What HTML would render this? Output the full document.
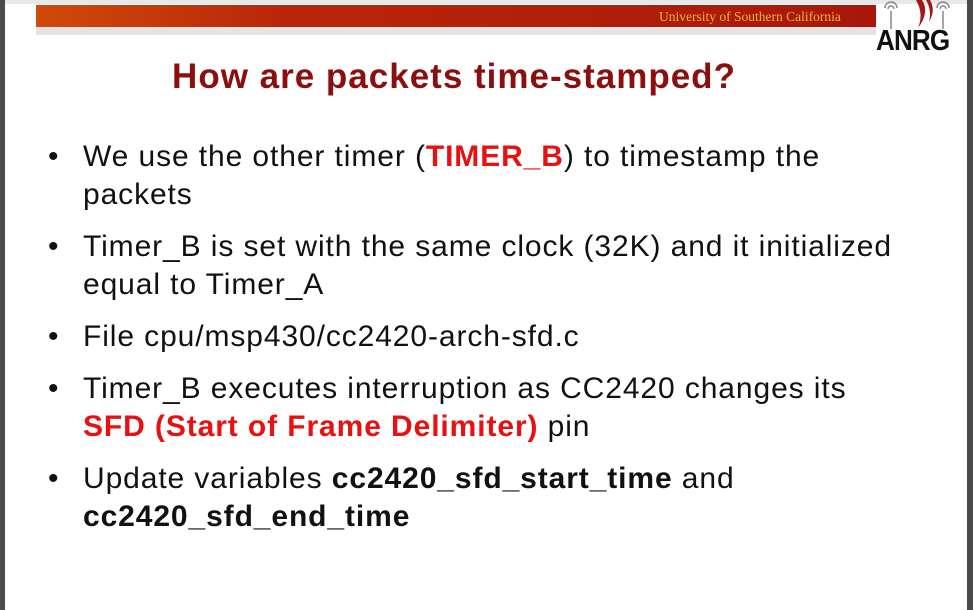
<!DOCTYPE html>
<html><head><style>
body{margin:0;width:973px;height:610px;position:relative;background:#fff;font-family:"Liberation Sans",Arial,sans-serif;overflow:hidden}
.lb{position:absolute;left:0;top:0;width:5px;height:610px;background:#4a4a4a}
.rb{position:absolute;right:0;top:0;width:6px;height:610px;background:#4a4a4a}
.top{position:absolute;left:5px;top:0;width:962px;height:4px;background:#e8e8e8}
.bar{position:absolute;left:36px;top:5px;width:840px;height:22px;background:linear-gradient(90deg,#d04a0a 0%,#b8260a 30%,#a8180a 100%)}
.gs{position:absolute;left:36px;top:27px;width:840px;height:8px;background:#e4e4e4}
.usc{position:absolute;left:659px;top:9px;font-family:"Liberation Serif",serif;font-size:13.5px;color:#f0b040}
h1{position:absolute;left:0;width:908px;text-align:center;top:57px;margin:0;font-size:35px;letter-spacing:1px;font-weight:bold;color:#8b0f0f}
ul{position:absolute;left:48px;top:138px;margin:0;padding:0;list-style:none;width:850px}
li{position:relative;padding-left:35px;font-size:30px;letter-spacing:0.9px;line-height:38px;color:#111;margin-bottom:14px}
li:before{content:"•";position:absolute;left:0;top:0}
.r{color:#e81010;font-weight:bold}
b{font-weight:bold}
.anrg{position:absolute;left:876px;top:25px;font-size:29px;font-weight:bold;color:#111;letter-spacing:-1px;transform:scaleX(0.9);transform-origin:left}
</style></head><body>
<div class="top"></div><div class="lb"></div><div class="rb"></div>
<div class="bar"></div><div class="gs"></div>
<div class="usc">University of Southern California</div>
<svg style="position:absolute;left:880px;top:0" width="80" height="30">
<g fill="none" stroke="#888" stroke-width="1.5"><path d="M5 8a6 6 0 0 1 12 0M8 9a3 3 0 0 1 6 0M57 8a6 6 0 0 1 12 0M60 9a3 3 0 0 1 6 0"/><path d="M11 11v18M63 11v18"/></g>
<path d="M42 0q8 12 -4 28q6-14 -2-28z M50 0q6 10 -1 22q3-12 -3-22z" fill="#a01818"/>
</svg>
<div class="anrg">ANRG</div>
<h1>How are packets time-stamped?</h1>
<ul>
<li>We use the other timer (<span class="r">TIMER_B</span>) to timestamp the packets</li>
<li>Timer_B is set with the same clock (32K) and it initialized equal to Timer_A</li>
<li>File cpu/msp430/cc2420-arch-sfd.c</li>
<li>Timer_B executes interruption as CC2420 changes its <span class="r">SFD (Start of Frame Delimiter)</span> pin</li>
<li>Update variables <b>cc2420_sfd_start_time</b> and <b>cc2420_sfd_end_time</b></li>
</ul>
</body></html>
